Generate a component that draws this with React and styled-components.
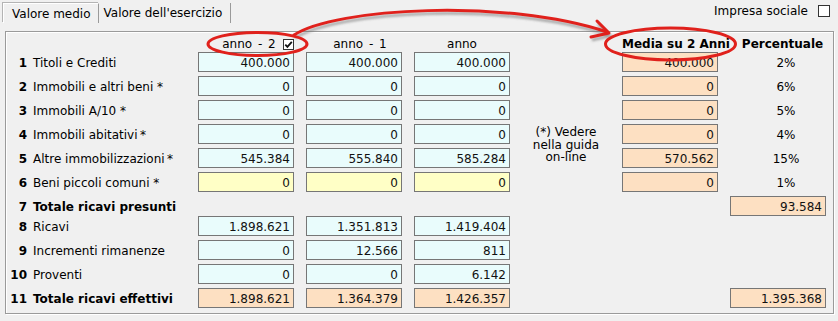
import { Fragment } from 'react';
import styled, { createGlobalStyle } from 'styled-components';

const GlobalStyle = createGlobalStyle`
  html, body {
    margin: 0;
    padding: 0;
    background: #f0f0f0;
  }
  body {
    font-family: 'DejaVu Sans', Verdana, sans-serif;
    font-size: 12px;
    color: #000;
  }
`;

const Window = styled.div`
  position: relative;
  width: 838px;
  height: 321px;
  overflow: hidden;
  background: #f0f0f0;
`;

const TopBar = styled.div`
  display: flex;
  justify-content: space-between;
  align-items: flex-start;
  height: 31px;
  padding: 0 8px 0 3px;
  box-sizing: border-box;
`;

const Tabs = styled.div`
  display: flex;
  margin-top: 3px;
`;

const Tab = styled.div`
  height: 20px;
  line-height: 20px;
  white-space: nowrap;
  box-sizing: border-box;
  padding: ${(p) => (p.$active ? '0 7px 0 8px' : '0 8px 0 5px')};
  border-right: 1px solid #9a9a9a;
  ${(p) =>
    p.$active &&
    `
    border-left: 1px solid #fff;
    border-top: 1px solid #fff;
    box-shadow: -1px -1px 0 #b4b4b4;
  `}
`;

const Social = styled.label`
  display: flex;
  align-items: center;
  gap: 10px;
  margin-top: 4px;
  height: 14px;
`;

const Box = styled.span`
  display: inline-flex;
  align-items: center;
  justify-content: center;
  width: ${(p) => p.$size}px;
  height: ${(p) => p.$size}px;
  box-sizing: border-box;
  border: 1px solid #333;
  background: #fff;
`;

const Panel = styled.div`
  margin-left: 5px;
  width: 829px;
  height: 283px;
  box-sizing: border-box;
  padding: 1px;
  border: 1px solid #9a9a9a;
  box-shadow: inset 1px 1px 0 #fff, 1px 1px 0 #fff;
`;

const Grid = styled.div`
  display: grid;
  grid-template-columns: 20px 171px 108px 108px 96px 112px 108px 96px;
  grid-auto-rows: ${(p) => p.$rowH}px;
  row-gap: 4px;
  align-items: ${(p) => (p.$head ? 'end' : 'stretch')};
`;

const Cell = styled.div`
  grid-row: ${(p) => p.$r};
  grid-column: ${(p) => p.$c};
  white-space: pre;
`;

const Num = styled(Cell)`
  font-weight: bold;
  text-align: right;
  line-height: 20px;
  padding-top: 1px;
`;

const Label = styled(Cell)`
  padding-left: 6px;
  line-height: 20px;
  padding-top: 1px;
  font-weight: ${(p) => (p.$bold ? 'bold' : 'normal')};
`;

const tones = {
  cyan: '#e9fcfc',
  yellow: '#ffffc6',
  peach: '#fde0c2',
};

const Field = styled(Cell)`
  width: 96px;
  height: 20px;
  box-sizing: border-box;
  border: 1px solid #767676;
  background: ${(p) => tones[p.$tone]};
  text-align: right;
  padding: 1px 3px 0 0;
  line-height: 18px;
  color: #111;
`;

const HeadText = styled(Cell)`
  display: flex;
  justify-content: center;
  align-items: center;
  gap: 7px;
  line-height: 14px;
  padding-bottom: 1px;
  padding-left: ${(p) => p.$shift || 0}px;
  font-weight: ${(p) => (p.$bold ? 'bold' : 'normal')};
  word-spacing: ${(p) => (p.$bold ? 0 : 2)}px;
`;

const Perc = styled(Cell)`
  text-align: center;
  line-height: 20px;
  padding: 1px 0 0 16px;
`;

const Note = styled(Cell)`
  text-align: center;
  line-height: 12.5px;
  padding-top: 2px;
`;

const Overlay = styled.svg`
  position: absolute;
  left: 0;
  top: 0;
  pointer-events: none;
`;

const upper = [
  { label: 'Titoli e Crediti', vals: ['400.000', '400.000', '400.000'], media: '400.000', perc: '2%' },
  { label: 'Immobili e altri beni *', vals: ['0', '0', '0'], media: '0', perc: '6%' },
  { label: 'Immobili A/10 *', vals: ['0', '0', '0'], media: '0', perc: '5%' },
  { label: 'Immobili abitativi\u2009*', vals: ['0', '0', '0'], media: '0', perc: '4%' },
  { label: 'Altre immobilizzazioni\u2009*', vals: ['545.384', '555.840', '585.284'], media: '570.562', perc: '15%' },
  { label: 'Beni piccoli comuni *', vals: ['0', '0', '0'], media: '0', perc: '1%', tone: 'yellow' },
];

const lower = [
  { label: 'Ricavi', vals: ['1.898.621', '1.351.813', '1.419.404'] },
  { label: 'Incrementi rimanenze', vals: ['0', '12.566', '811'] },
  { label: 'Proventi', vals: ['0', '0', '6.142'] },
];

const Check = () => (
  <svg width="9" height="9" viewBox="0 0 9 9">
    <path d="M1.3 4.6 L3.4 6.8 L7.8 1.8" stroke="#111" strokeWidth="1.8" fill="none" />
  </svg>
);

const Annotations = () => (
  <Overlay width="838" height="321" viewBox="0 0 838 321">
    <defs>
      <filter id="soft" x="-10%" y="-60%" width="120%" height="220%">
        <feGaussianBlur stdDeviation="1.3" />
      </filter>
    </defs>
    <g transform="translate(1 3)" stroke="#6a6a6a" strokeOpacity="0.5" strokeWidth="3" fill="none" filter="url(#soft)">
      <path d="M294 35 C335 8 505 -2 607 32" />
      <path d="M597 21 L609 33 L591 37" />
    </g>
    <g stroke="#e0211c" strokeWidth="3" fill="none" strokeLinecap="round" strokeLinejoin="round">
      <path d="M294 35 C335 8 505 -2 607 32" />
      <path d="M597 21 L609 33 L591 37" />
      <ellipse cx="257.5" cy="44" rx="49.5" ry="11.5" />
      <ellipse cx="670.5" cy="44" rx="65" ry="16" />
    </g>
  </Overlay>
);

const App = () => {
  return (
    <>
      <GlobalStyle />
      <Window>
        <TopBar>
          <Tabs>
            <Tab $active>Valore medio</Tab>
            <Tab>Valore dell'esercizio</Tab>
          </Tabs>
          <Social>
            Impresa sociale
            <Box $size={12} />
          </Social>
        </TopBar>

        <Panel>
          <Grid $rowH={19} $head>
            <HeadText $r={1} $c={3} $shift={12}>
              anno - 2
              <Box $size={11}>
                <Check />
              </Box>
            </HeadText>
            <HeadText $r={1} $c={4}>
              anno - 1
            </HeadText>
            <HeadText $r={1} $c={5}>anno</HeadText>
            <HeadText $r={1} $c={7} $bold>
              Media su 2 Anni
            </HeadText>
            <HeadText $r={1} $c={8} $bold $shift={9}>
              Percentuale
            </HeadText>
          </Grid>

          <Grid $rowH={20}>
            {upper.map((row, i) => (
              <Fragment key={`u${i}`}>
                <Num $r={i + 1} $c={1}>
                  {i + 1}
                </Num>
                <Label $r={i + 1} $c={2}>
                  {row.label}
                </Label>
                {row.vals.map((v, j) => (
                  <Field key={j} $r={i + 1} $c={j + 3} $tone={row.tone || 'cyan'}>
                    {v}
                  </Field>
                ))}
                <Field $r={i + 1} $c={7} $tone="peach">
                  {row.media}
                </Field>
                <Perc $r={i + 1} $c={8}>
                  {row.perc}
                </Perc>
              </Fragment>
            ))}
            <Note $r="4 / span 3" $c={6}>
              {'(*) Vedere\nnella guida\non-line'}
            </Note>
            <Num $r={7} $c={1}>7</Num>
            <Label $r={7} $c={2} $bold>
              Totale ricavi presunti
            </Label>
            <Field $r={7} $c={8} $tone="peach">
              93.584
            </Field>
          </Grid>

          <Grid $rowH={20}>
            {lower.map((row, i) => (
              <Fragment key={`l${i}`}>
                <Num $r={i + 1} $c={1}>
                  {i + 8}
                </Num>
                <Label $r={i + 1} $c={2}>
                  {row.label}
                </Label>
                {row.vals.map((v, j) => (
                  <Field key={j} $r={i + 1} $c={j + 3} $tone="cyan">
                    {v}
                  </Field>
                ))}
              </Fragment>
            ))}
            <Num $r={4} $c={1}>11</Num>
            <Label $r={4} $c={2} $bold>
              Totale ricavi effettivi
            </Label>
            <Field $r={4} $c={3} $tone="peach">1.898.621</Field>
            <Field $r={4} $c={4} $tone="peach">1.364.379</Field>
            <Field $r={4} $c={5} $tone="peach">1.426.357</Field>
            <Field $r={4} $c={8} $tone="peach">1.395.368</Field>
          </Grid>
        </Panel>

        <Annotations />
      </Window>
    </>
  );
};

export default App;
